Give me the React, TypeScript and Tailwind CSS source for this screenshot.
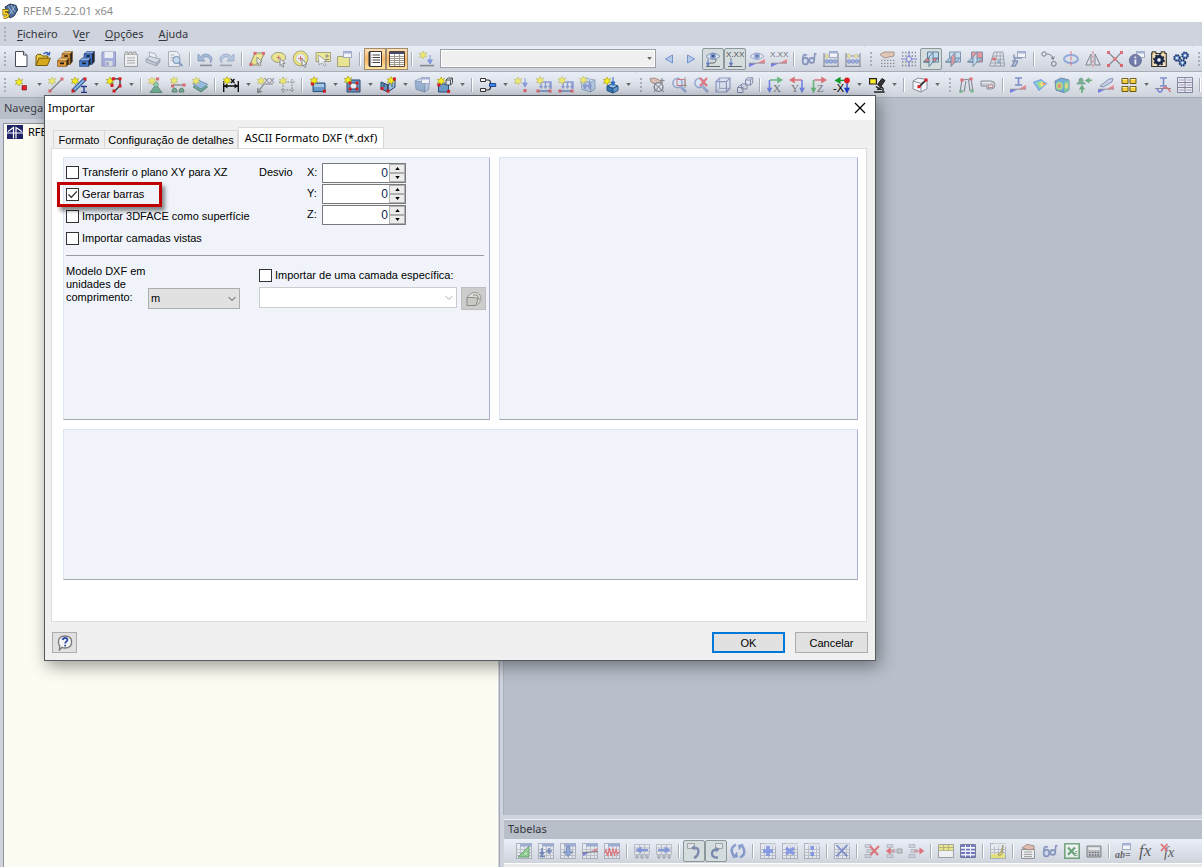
import React, { useState } from 'react';
import { ChevronDown } from 'lucide-react';

/* ---------- icon parts ---------- */

const Star = ({ x = 4, y = 4 }: { x?: number; y?: number }) => (
  <g transform={`translate(${x} ${y})`}>
    <path d="M0-4 1.2-1.6 3.6-2.6 2.4 0 4 1.6 1.4 1.6.4 4-1 1.8-3.6 2.4-2.2 0-4-1.6-1.4-1.4Z" fill="#f4ec1c" stroke="#a39a25" strokeWidth=".6" />
  </g>
);

const Dot = ({ x, y, c = '#d81f26' }: { x: number; y: number; c?: string }) => (
  <rect x={x - 1.5} y={y - 1.5} width="3" height="3" fill={c} />
);

const Grid = ({ head = '#6f86bd' }: { head?: string }) => (
  <g>
    <rect x=".5" y=".5" width="15" height="15" fill="#eceef2" stroke="#8d939d" />
    <path d="M.5 6.5h15M.5 9.5h15M.5 12.5h15M4.5 3v12M8.5 3v12M12.5 3v12" stroke="#a6abb4" fill="none" />
    <path d="M4 .5h12v3H4z" fill={head} />
  </g>
);

const Cabinet = ({ a, b, c }: { a: string; b: string; c: string }) => (
  <g stroke={c} strokeWidth=".6" strokeLinejoin="round">
    <path d="M5 3 8 .6h7.4L13 3.2Z" fill={a} />
    <path d="M13 3.2 15.4.6v10.2L13 13.4Z" fill="#2b2622" />
    <path d="M5 3h8v10.4H5z" fill={b} />
    <path d="M.6 9.4 3 7h8.6L9.4 10H.6Z" fill={a} />
    <path d="M9.4 10 11.6 7.5v5.4l-2.2 2.5Z" fill="#2b2622" />
    <path d="M.6 10h8.8v5.4H.6z" fill={b} />
    <path d="M7.2 5h3.8M3 12.4h4" stroke="#1c1c1c" strokeWidth="1.6" />
  </g>
);

const Glasses = () => (
  <g fill="none" stroke="#4f64a0" strokeWidth="1.6">
    <ellipse cx="4.4" cy="10" rx="2.8" ry="3.4" fill="#c9d6ef" />
    <circle cx="10.8" cy="9.4" r="2.5" fill="#c9d6ef" />
    <path d="M1.8 9Q1.600 4 4 3.600l2 .6M7.2 10l1.200-.4M13.2 9l.6-6 1.600-.4" />
  </g>
);

const Eye = () => (
  <g>
    <path d="M1 5.4Q8-1.5 15 5.4 8 11.5 1 5.4Z" fill="#e6ecf8" stroke="#6a7ba5" />
    <circle cx="8" cy="5" r="3" fill="#5a7fd0" />
    <circle cx="8" cy="5" r="1.2" fill="#1e2c55" />
  </g>
);

const Wedge = () => (
  <g>
    <path d="M0 16V12.200h8Z" fill="#3442e0" />
    <path d="M16 8v4.200H8Z" fill="#f0505a" />
    <path d="M0 12.2h16" stroke="#555" strokeWidth=".7" />
  </g>
);

const Lens = () => (
  <g>
    <circle cx="6.5" cy="6" r="4.6" fill="#dce8fb" stroke="#6b86c4" strokeWidth="1.6" />
    <path d="m10 10 5 5" stroke="#6b86c4" strokeWidth="2.6" />
  </g>
);

const Beads = () => (
  <g>
    <path d="M1 2v14M15 2v14M1 5h14M1 10h14M0 15.4h16" stroke="#5c6170" strokeWidth="1.2" />
    <g fill="#f0e480" stroke="#9a9050" strokeWidth=".5"><circle cx="4" cy="5" r="1.9" /><circle cx="11" cy="5" r="1.9" /></g>
    <g fill="#6f8fe0" stroke="#40558f" strokeWidth=".5"><circle cx="4" cy="10.400" r="2" /><circle cx="8" cy="10.400" r="2" /><circle cx="12" cy="10.400" r="2" /></g>
  </g>
);

const Window = ({ x = 7, y = 0 }: { x?: number; y?: number }) => (
  <g transform={`translate(${x} ${y})`}>
    <rect x=".5" y=".5" width="8" height="6" fill="#fff" stroke="#7c87a8" />
    <path d="M.5 1.5h8" stroke="#7a8fcb" strokeWidth="2" />
  </g>
);

// three crossing work planes; one of them is picked out in red
const Planes = ({ pick }: { pick: 'floor' | 'side' | 'front' }) => (
  <g stroke="#2b5378" strokeWidth=".9" strokeLinejoin="round">
    <path d="M4.5 1h11v10h-11z" fill={pick === 'front' ? '#f0636a' : '#b5dbf2'} />
    <path d="M.5 11 4.500 7h11L11 11Z" fill={pick === 'floor' ? '#f0636a' : '#86bbe0'} />
    <path d="m6 6 4-4.5V11l-4 4.5Z" fill={pick === 'side' ? '#f0636a' : '#bfe0f3'} fillOpacity=".85" />
    <path d="M.5 11h5.500" />
  </g>
);

const Axis = ({ l, h, v, flip, c = '#333' }: { l: string; h: string; v: string; flip?: boolean; c?: string }) => (
  <g>
    {flip ? (
      <path d="M13 3H4M5 1 1.500 3 5 5Z" stroke={h} fill={h} strokeWidth="1.6" />
    ) : (
      <path d="M3 3h9M11 1l3.500 2L11 5Z" stroke={h} fill={h} strokeWidth="1.6" />
    )}
    {flip ? (
      <path d="M13 3V12M11.500 11.500l1.500 3 1.500-3Z" stroke={v} fill={v} strokeWidth="1.6" />
    ) : (
      <path d="M2.500 3V12M1 11.500l1.500 3 1.500-3Z" stroke={v} fill={v} strokeWidth="1.6" />
    )}
    <text x={flip ? 2 : 6} y="15" fontSize="11" fontFamily="Liberation Serif, serif" fill={c}>{l}</text>
  </g>
);

const Xxx = ({ y = 5.5 }: { y?: number }) => (
  <text x="-1" y={y} fontSize="8" fontFamily="Liberation Sans, sans-serif" fill="#222">X.XX</text>
);

const Loads = () => (
  <g>
    <path d="M4 5h11v7M5 5v5M9.5 5v5M14 5v5" stroke="#5572c4" fill="none" strokeWidth="1.4" />
    <path d="m3 9 2 3 2-3ZM7.5 9l2 3 2-3ZM12 9l2 3 2-3Z" fill="#5572c4" />
    <path d="M1 14h14" stroke="#4c79b0" strokeWidth="2" />
    <Dot x={2} y={14} /><Dot x={14} y={14} />
  </g>
);

const Box3d = ({ f = '#6f97c7' }: { f?: string }) => (
  <g stroke="#3c5f8c" strokeWidth=".7">
    <path d="M1 4 6 1.4 15 3l-4.4 2.6Z" fill="#c8dcf0" />
    <path d="m1 4 9.6 1.6V15L2 12.4Z" fill={f} />
    <path d="M10.6 5.6 15 3v9l-4.4 3Z" fill="#9dbbdd" />
  </g>
);

const FootTable = () => (
  <g>
    <path d="M.5 1.5h15v10H.5zM.5 5h15M.5 8.5h15M5.5 1.5v10M10.5 1.5v10" fill="#e6e8ec" stroke="#9196a0" strokeWidth=".8" />
    <path d="M2 12v3h2v-3M7 12v3h2v-3M12 12v3h2v-3" fill="none" stroke="#6a6e78" />
  </g>
);

const Rows = () => (
  <g fill="#c4c7cc" stroke="#888d96" strokeWidth=".7">
    <path d="M1 1.5h6v3H1zM3 6.5h6v3H3zM1 11.5h6v3H1z" />
  </g>
);

const icons: Record<string, React.ReactNode> = {
  new: <g><path d="M2.5.5h8l3.5 3.5v11.5H2.5Z" fill="#fff" stroke="#444a57" /><path d="M10.5.5V4H14" fill="#dde" stroke="#444a57" /></g>,
  open: <g><path d="M1 14.5V5l1.5-1.6H6L7.4 5h5.4v2" fill="#e9c63e" stroke="#6f5a10" /><path d="M1 14.5 4 7.2h11.4l-3 7.3Z" fill="#d7a81d" stroke="#6f5a10" /><path d="M8.5 3q3-3 5.4 0M14.8.8l-.6 3-2.6-1" fill="none" stroke="#2f62b5" strokeWidth="1.3" /></g>,
  cabOrange: <Cabinet a="#f4c278" b="#e09a3c" c="#6d430f" />,
  cabBlue: <Cabinet a="#8db3ea" b="#4b7fd6" c="#1a3468" />,
  save: <g><path d="M1 1h13.5v14H1z" fill="#8690d6" stroke="#5b639f" /><path d="M3.5 1h8.5v6H3.5z" fill="#f3f4fa" /><path d="M4.5 10h7v5h-7z" fill="#d5d8e2" /><path d="M5.5 11h2v3.6h-2z" fill="#68709b" /></g>,
  notes: <g><path d="M1.5 3.5h13v12h-13z" fill="#fafafa" stroke="#777" /><path d="M2 3.5V1h3v2.5M6 3.5V1h3v2.5M10 3.5V1h3v2.5" fill="#d7d7b8" stroke="#777" /><path d="M4 7h8M4 9.5h8M4 12h8" stroke="#888" /></g>,
  print: <g stroke="#6c7488" strokeWidth=".8"><path d="M4 1 10 2.6l2 5-7-1.4Z" fill="#f7f8fb" /><path d="m1 8 4-2.6 10 2.8-3.6 4Z" fill="#d5dae6" /><path d="m1 8 10.4 4.2V15L1 11Z" fill="#b4bccd" /><path d="M11.4 12.2 15 8.2V11l-3.6 4Z" fill="#929bb0" /></g>,
  preview: <g><path d="M1.5.5h8l3 3v12h-11Z" fill="#f4f5f8" stroke="#888e9c" /><path d="M3.5 4h4M3.5 6.5h3M3.5 9h2" stroke="#999" /><circle cx="9.5" cy="9" r="3.4" fill="#bcd8f2" stroke="#5478ac" strokeWidth="1.3" /><path d="m12 11.5 3.4 3.6" stroke="#5478ac" strokeWidth="2.2" /></g>,
  undo: <g><path d="M1 3v7h7L5.6 7.6Q9 4 12.4 7.4q1.8 2 .8 4.6Q17 7.4 13 4.4 8.4 1.4 3.6 5.4Z" fill="#7d9fcb" stroke="#47689a" strokeWidth=".8" /><path d="M3 14.4h12" stroke="#595e68" strokeWidth="1.6" /></g>,
  redo: <g transform="translate(16 0) scale(-1 1)"><path d="M1 3v7h7L5.6 7.6Q9 4 12.4 7.4q1.8 2 .8 4.6Q17 7.4 13 4.4 8.4 1.4 3.6 5.4Z" fill="#9eb6d8" stroke="#6582ad" strokeWidth=".8" /><path d="M3 14.4h12" stroke="#7c8089" strokeWidth="1.6" /></g>,
  selPara: <g><path d="M6 2h9.5L10 14H.8Z" fill="#f1e95a" stroke="#5c572f" /><Dot x={6} y={2.4} /><Dot x={14.4} y={2.4} /><Dot x={2} y={13.4} /><path d="m8 6 5 5-2.4.2 1.4 3-1.600.6-1.400-3L8 13Z" fill="#fff" stroke="#555" strokeWidth=".9" /></g>,
  selEllipse: <g><ellipse cx="7.6" cy="6.4" rx="7" ry="5" fill="#f1e95a" stroke="#6f6937" /><path d="M7.5 4.4v4M5.5 6.4h4" stroke="#d03030" /><path d="m9 7.400 5 5-2.4.2 1.4 3-1.600.4-1.200-2.600-1.200 1.200Z" fill="#fff" stroke="#555" /></g>,
  selRing: <g><circle cx="7.6" cy="7.4" r="6" fill="none" stroke="#6f6937" strokeWidth="3.6" /><circle cx="7.6" cy="7.4" r="6" fill="#fff" fillOpacity=".6" stroke="#f1e52a" strokeWidth="2.2" /><path d="M7.5 5v5M5 7.4h5" stroke="#d03030" /><path d="m9 8 5 5-2.4.2 1.4 2.6-1.600.4-1.200-2.400L9 15Z" fill="#fff" stroke="#555" /></g>,
  selArrow: <g><path d="M1 1.5h14.5v9H1z" fill="#f3ea5a" stroke="#807a40" /><path d="M12 3v4M10 5h4M10 8.5h4" stroke="#555" /><path d="m3 4 1.2 10L7 11.6l2.4 3.6 1.6-1-2.2-3.6 3-.6Z" fill="#fff" stroke="#666" strokeWidth=".8" /></g>,
  selWin: <g><path d="M.5 5.5h12v10H.5z" fill="#f3ea5a" stroke="#807a40" /><Window x={6} /></g>,
  list: <g><path d="M2.5.5h12v15h-12z" fill="#fff" stroke="#333" /><path d="M2.5 1v14" stroke="#333" strokeWidth="2" /><path d="M6 4h7M6 6.5h7M6 9h7M6 11.5h7M4.6 4h.8M4.6 6.5h.8M4.6 9h.8M4.6 11.5h.8" stroke="#444" /></g>,
  tableBtn: <g><path d="M.5.5h15v15H.5z" fill="#fff" stroke="#574434" /><path d="M1 2h14" stroke="#4a4a70" strokeWidth="2" /><path d="M1 5.500h14M1 7.500h14M1 9.500h14M1 11.500h14M1 13.500h14M5.500 3v12M10.500 3v12" stroke="#a39a90" /></g>,
  loadNew: <g><Star x={4} y={4} /><path d="M11 4v6M8.6 9l2.4 4 2.4-4Z" fill="#4a6fd0" stroke="#4a6fd0" /><path d="M1 14.6h14" stroke="#555" strokeWidth="1.6" /></g>,
  prev: <path d="M11.5 4v8L4.5 8Z" fill="#9dbdf0" stroke="#2f62b5" />,
  next: <path d="M4.5 4v8l7-4Z" fill="#9dbdf0" stroke="#2f62b5" />,
  eyeDown: <g><Eye /><path d="M3 8v5M1.500 12 3 15l1.500-3Z" fill="#3d5fb0" stroke="#3d5fb0" /><path d="M1 15.500h14M5 12h4q2.500-1 2-4" fill="none" stroke="#444" /></g>,
  xxxDown: <g><Xxx /><path d="M4 7v6M2.500 12 4 15l1.500-3Z" fill="#3d5fb0" stroke="#3d5fb0" /><path d="M1 15.500h14" stroke="#444" /></g>,
  eyeWedge: <g><Eye /><Wedge /></g>,
  xxxWedge: <g><Xxx /><Wedge /></g>,
  glasses: <Glasses />,
  beadsWin: <g><Beads /><Window x={6} /></g>,
  beads: <Beads />,
  handGrid: <g><path d="M1 3.5 5 1h10v4l-5 1-4 1-2-1Z" fill="#e2b392" stroke="#6b4a36" strokeWidth=".8" /><path d="M2 9.4h14M2 12.4h14M2 15.4h14" stroke="#555b68" strokeWidth="1.4" strokeDasharray="1.4 1.6" /></g>,
  snap: <g><path d="M1 1.5h14M1 5h14M1 11h14M1 14.5h14" stroke="#444b5c" strokeDasharray="1.4 1.8" strokeWidth="1.4" /><path d="M8 0v16M0 8h16" stroke="#3d4cc0" /><circle cx="8" cy="8" r="2.6" fill="#dfe4f4" stroke="#3d4cc0" /></g>,
  plane1: <Planes pick="floor" />,
  plane2: <Planes pick="side" />,
  plane3: <Planes pick="front" />,
  gridTilt: <g><path d="M5 1h9l1.5 14H.5Z" fill="#dde2e9" stroke="#6e7580" /><path d="M4 5h11M3 8.4h12M2 12h13M8 1 6 15M11 1l.6 14" stroke="#6e7580" strokeWidth=".8" /><Dot x={5} y={8} /><Dot x={10} y={11} c="#5a8ab8" /></g>,
  cutWin: <g><Window x={6} /><path d="M3 3.500v3.500h8V7M1 10h6M4 7v3l-3 5h3l3-5" stroke="#4f6699" fill="none" strokeWidth="1.5" /></g>,
  copyNode: <g fill="none" stroke="#333844"><circle cx="3" cy="3" r="2.2" /><circle cx="12.8" cy="12.8" r="2.4" /><path d="M6 3q5 0 6 5M9.800 6.400 12.200 8.600l1-3.200" /></g>,
  rotate: <g><ellipse cx="8" cy="8" rx="7" ry="4" fill="none" stroke="#5c86cf" strokeWidth="2" /><path d="M8 0v16" stroke="#d8313a" strokeDasharray="4 1.4" /></g>,
  mirror: <g><path d="M6 3v11H.8ZM10 3v11h5.2Z" fill="#e1e4e9" stroke="#444a56" /><path d="M8 0v16" stroke="#d8313a" strokeDasharray="3 1.4" /></g>,
  cross: <g><path d="m1.5 1.5 13 13M14.5 1.5l-13 13" stroke="#4c5058" strokeWidth="1.2" /><Dot x={1.5} y={1.5} /><Dot x={14.5} y={1.5} /><Dot x={1.5} y={14.5} /><Dot x={14.5} y={14.5} /><circle cx="8" cy="8" r="2" fill="#e33a42" /></g>,
  info: <g><Window x={7} /><circle cx="6.4" cy="9.4" r="6" fill="#2f3c83" stroke="#202c60" /><path d="M6.4 8.4v5M6.4 5.4v1.8" stroke="#fff" strokeWidth="1.8" /></g>,
  gearBox: <g><path d="M.7 2.5h14.6v13H.7z" fill="#f3dfb8" stroke="#333" strokeWidth="1.1" /><path d="M1 3V.8h4V3M10 3V.8h4V3" fill="#e8c98c" stroke="#333" /><circle cx="8" cy="9" r="3.4" fill="#8fb0dc" stroke="#1c2a48" strokeWidth="3" /><circle cx="8" cy="9" r="5.2" fill="none" stroke="#1c2a48" strokeWidth="1.4" strokeDasharray="2 2" /><circle cx="8" cy="9" r="1.4" fill="#fff" /></g>,
  gears: <g stroke="#1c3768" fill="#6d96d8"><circle cx="4" cy="7" r="2.9" strokeWidth="1.8" strokeDasharray="1.6 .7" /><circle cx="12" cy="4.4" r="2.9" strokeWidth="1.8" strokeDasharray="1.6 .7" /><circle cx="9.4" cy="11.8" r="2.9" strokeWidth="1.8" strokeDasharray="1.6 .7" /><g fill="#fff" stroke="none"><circle cx="4" cy="7" r="1" /><circle cx="12" cy="4.4" r="1" /><circle cx="9.4" cy="11.8" r="1" /></g></g>,

  node: <g><Star x={5} y={5} /><path d="M8 8.500h4.500V13H8z" fill="#e0222a" stroke="#7d1014" strokeWidth=".6" /></g>,
  line: <g><path d="M2 14 14 2" stroke="#444" strokeWidth="1.2" /><Star x={4} y={4} /><Dot x={2} y={14} /><Dot x={14} y={2} /></g>,
  member: <g><path d="M2 14 14 2" stroke="#2d5b9a" strokeWidth="4" /><path d="M2 14 14 2" stroke="#8ab7e8" strokeWidth="2" /><Star x={4} y={4} /><Dot x={2} y={14} /><Dot x={14} y={2} /><path d="M10 9.5h6M13 9.5v6M10 15.4h6" stroke="#27408e" strokeWidth="1.4" /></g>,
  poly: <g><path d="M6 8V1.800h8v7L8 14.600" fill="none" stroke="#333" strokeWidth="1.3" /><Star x={4} y={4} /><Dot x={7.5} y={1.8} /><Dot x={14} y={1.8} /><Dot x={14} y={9} /><Dot x={6} y={8.5} /><Dot x={8} y={14} /></g>,
  support: <g><path d="M8 4v4" stroke="#555" /><path d="M4 13q4-8 8 0l2 2.4H2Z" fill="#2f9863" stroke="#1f5d3c" /><circle cx="8" cy="7.6" r="2.4" fill="#5fc38c" stroke="#1f5d3c" strokeWidth=".6" /><Star x={4} y={4} /><Dot x={9.6} y={2} /></g>,
  lineSupport: <g><path d="M3 8h11" stroke="#555" strokeWidth="1.4" /><path d="M2 15q0-4 2.500-4T7 15ZM9 15q0-4 2.500-4T14 15Z" fill="#3f9867" stroke="#1f5d3c" /><Star x={4} y={3.6} /><Dot x={2.6} y={9} /><Dot x={14} y={8} /></g>,
  surfSupport: <g><path d="m1 10 6-4 8.6 4L9 15Z" fill="#2c8b63" stroke="#1c5f43" /><path d="m1 7.4 6-4 8.6 4L9 12Z" fill="#6eaadd" stroke="#31618c" /><Star x={4} y={4} /></g>,
  dimension: <g><path d="M.7 4v11M15.300 4v11M1 9h14" stroke="#111" strokeWidth="1.4" /><path d="m1 9 3.400-2.400v4.800ZM15 9l-3.400-2.400v4.800Z" fill="#111" /><Star x={4} y={3.5} /><path d="m8 2 3.500 4M11.500 2 8 6" stroke="#111" strokeWidth="1.300" /></g>,
  comment: <g><path d="M16 7H7l-6 8M.8 11v4.4l4-1" stroke="#444" fill="none" strokeWidth="1.2" /><Star x={4} y={4} /><text x="7" y="6" fontSize="8" fontFamily="Liberation Sans, sans-serif" fill="#222">XX</text></g>,
  guide: <g><path d="M4 0v16M13 2v14M0 5h16M2 13h14" stroke="#444" strokeDasharray="1.6 1.2" /><Star x={4} y={4} /></g>,
  surface: <g><path d="M3 6h12v8.6H3Z" fill="#6d9fce" stroke="#2c547f" /><path d="M4 7h10v3H4z" fill="#a9cbe8" /><Star x={4} y={3.6} /><Dot x={2.4} y={7} /><Dot x={14.4} y={14.2} /></g>,
  opening: <g><path d="M2 3h13v12H2z" fill="#6d9fce" stroke="#274a70" /><path d="M5 6h7v6H5z" fill="#eef2f8" stroke="#274a70" /><Star x={3} y={3} /><Dot x={5} y={6} /><Dot x={12} y={6} /><Dot x={5} y={12} /><Dot x={12} y={12} /></g>,
  intersect: <g><path d="m1 5 7 3v7l-7-3Z" fill="#5f93c8" stroke="#22466d" /><path d="m8 8 7-5v7l-7 5Z" fill="#9fc6e8" stroke="#22466d" /><path d="M4 6v4M12 6v4M8 7v7" stroke="#333" strokeWidth=".8" /><Star x={11} y={3.5} /><Dot x={14.4} y={2} /><Dot x={2} y={11.6} /><Dot x={8} y={14} /></g>,
  solid: <g><Box3d /><Window x={7} /></g>,
  solidNew: <g><path d="M1.5 7h10v8h-10z" fill="#6d9fce" stroke="#2c547f" /><path d="M9 3h4.5v5H9zM9 3l2-2h4.5v5l-2 2M13.5 3l2-2" fill="#dfe6ef" stroke="#333" strokeWidth=".8" /><Star x={4} y={4} /><Dot x={1.8} y={8} /><Dot x={11.6} y={14.4} /></g>,
  combine: <g><path d="M.5 1.5h5v3h-5zM.5 11.5h5v3h-5z" fill="#fff" stroke="#333" /><path d="M6 3h2q2.6 0 2.6 3.4M6 13h2q2.6 0 2.6-3.4" fill="none" stroke="#333" strokeWidth="1.2" /><path d="M9.5 6.5h6.2v3H9.5z" fill="#3f85e8" stroke="#1d4a94" /></g>,
  nodeLoad: <g><Star x={4} y={4} /><path d="M11 1v6M8.8 6l2.2 4 2.2-4Z" fill="#4a6fd0" stroke="#4a6fd0" /><Dot x={11} y={13.6} /></g>,
  memLoad: <g><Loads /><Star x={4} y={3.4} /></g>,
  surfLoad: <g><Box3d f="#a9c5e4" /><path d="M5 3v8M9.5 3v8M3 8l2 4 2-4ZM7.5 8l2 4 2-4Z" fill="#5572c4" stroke="#5572c4" /><Star x={3.4} y={3} /></g>,
  solidLoad: <g><path d="M4 9 9 7l6 2-5 2.4Z" fill="#a6cbee" stroke="#265689" /><path d="m4 9 6 2.4V16l-6-2.4Z" fill="#3a78b8" stroke="#265689" /><path d="M10 11.4 15 9v4.4L10 16Z" fill="#6ba3d8" stroke="#265689" /><path d="M10 0v6M8 5l2 3.6L12 5Z" fill="#2e69c8" stroke="#2e69c8" /><Star x={4} y={4} /></g>,
  pan: <g><path d="M1 1.6 6 1l6 3v4l-6-1-4-2Z" fill="#d8a58f" stroke="#65412b" strokeWidth=".8" /><circle cx="9.6" cy="10" r="4.4" fill="#dfe2e8" stroke="#464c58" strokeWidth="1.4" /><path d="m5 15 9-10M5 6l10 9M13 1v5M10.6 3.4h5" stroke="#40454e" /></g>,
  zoomRect: <g><Lens /><path d="M6 2.5h8v6H6z" fill="none" stroke="#c4333a" /><path d="M14 0v11M11 8.5h5" stroke="#555" strokeWidth=".8" /></g>,
  zoomX: <g><Lens /><path d="m7 1 7 8M14 1 7 9" stroke="#e2323a" strokeWidth="2" /></g>,
  cube: <g fill="#d9e2f2" stroke="#5b6aa4" strokeWidth="1.2"><path d="M1 4.6h10.4V15H1zM1 4.6 4.6 1H15l-3.6 3.6M15 1v10.4L11.4 15" /><path d="M4.6 1v10.4H15M4.6 11.4 1 15" fill="none" strokeWidth=".8" /></g>,
  cubes: <g fill="#dfe5f2" stroke="#4d5684" strokeWidth="1"><path d="M8.500 3 10.500.8h5.200V6l-2.200 2h-5ZM8.500 3h5v5M13.500 3l2.200-2.200M4.500 7h5.500v5H4.500ZM.5 10.500h5.500v5H.5ZM.5 10.500 2.500 8.500H4.500M6 10.500l1.500-1.500" /></g>,
  axX: <Axis l="X" h="#1d9a38" v="#2a4be0" />,
  axY: <Axis l="Y" h="#d9262e" v="#2a4be0" flip />,
  axZ: <Axis l="Z" h="#d9262e" v="#1d9a38" />,
  axNX: <g><path d="M13 3.4H4M6 .8 1.6 3.4 6 6Z" stroke="#159a2c" fill="#159a2c" strokeWidth="1.2" /><path d="M13 4v9M11 11.4l2 4 2-4Z" stroke="#1d3fc8" fill="#1d3fc8" strokeWidth="1.2" /><circle cx="13" cy="3.4" r="2.8" fill="#e01820" /><text x="-1" y="15" fontSize="11" fontFamily="Liberation Sans, sans-serif">-X</text></g>,
  render: <g><path d="m13 1.500-4.500 6 3 2.500 4.500-6.500Z" fill="#333" stroke="#222" /><path d="M7 9.500q3 3 5.500.5M5 15h10.600M12 10q3.400 1.400 1.600 4M8 12.400h5" fill="none" stroke="#222" strokeWidth="1.4" /><path d="M.6 1.600h6.800v5.400H.6z" fill="#ffee2e" stroke="#222" strokeWidth="1.2" /></g>,
  clip: <g><path d="M1 4 6 1l9 1.6v9L9 15l-8-3Z" fill="#f2f4f7" stroke="#8a909c" /><path d="M1 4l8 2.4V15M9 6.4l6-3.8" fill="none" stroke="#8a909c" /><path d="m7 10 7-7" stroke="#222" strokeWidth="1.6" /><Dot x={14} y={3} /><Dot x={7} y={9.6} /></g>,
  frame: <g><path d="M2 15 4 3l9-1 2 12M6 15l2-11M10.500 3 12 14" fill="none" stroke="#464b56" strokeWidth="1.1" /><Dot x={4} y={3} /><Dot x={13} y={2} /><Dot x={3} y={14.4} c="#3b9b5c" /><Dot x={14} y={14} c="#3b9b5c" /></g>,
  cylinder: <g><path d="M1 4h10q4 0 4 4t-4 4H7V9H1Z" fill="#b9bcc2" stroke="#5d626b" /><path d="M2 5.6h9" stroke="#fff" /><path d="M8.500 8h4v2.500h-4z" fill="#f2f2f2" stroke="#a33b3f" strokeWidth=".8" /></g>,
  iWedge: <g><path d="M5 1h7M8.5 1v7M5 8h7" stroke="#3e58b4" strokeWidth="1.6" /><Wedge /></g>,
  isoSurf: <g><path d="m.8 5 8-3 6.800 4.500L7 14Z" fill="#3f6fe0" /><path d="m2.500 5.600 6.500-2.400 5.600 3.600-7.200 5.400Z" fill="#46c8d8" /><path d="m4.500 6 5-1.800 4.500 3-6 4Z" fill="#6fd94a" /><path d="m7 6.400 3.500-1.400 3.500 2.200-4.500 2.600Z" fill="#f6e33c" /><path d="m10 6.200 1.600-.6 2.400 1.500-2 1.200Z" fill="#ee5035" /></g>,
  isoBox: <g><path d="M1 4 7 1l8 2v10l-5 2.6L2 13Z" fill="#2f89d0" stroke="#2b4c7a" /><path d="m10 5.4 5-2.2V13l-5 2.6Z" fill="#42b87a" /><ellipse cx="5.4" cy="9" rx="3.4" ry="4" fill="#8de04a" /><ellipse cx="5.4" cy="9" rx="1.8" ry="2.4" fill="#f0602a" /><ellipse cx="12.4" cy="9" rx="1.4" ry="3" fill="#f3d63a" /></g>,
  reaction: <g><path d="M.6 7 3 4.500Q2.600 1 5 1t2 3.500L9.500 7Z" fill="#39915f" stroke="#1f5d3c" strokeWidth=".6" /><path d="M6 11v5M4.400 11.600 6 9l1.600 2.600ZM16 3.400h-4M12.600 1.800l-2.400 1.600 2.400 1.600Z" fill="#1f8a3a" stroke="#1f8a3a" strokeWidth="1.6" /></g>,
  pipeWedge: <g><path d="m2 9 9-7 4-.4-1 3.2L5 10Z" fill="#b9cbe8" stroke="#4b5e8e" /><Wedge /></g>,
  panels: <g fill="#f2cf3e" stroke="#6b5613"><path d="M1 1.5h6v5H1zM9 1.5h6v5H9zM1 9.5h6v5H1zM9 9.5h6v5H9z" /><path d="M1.6 2.4h4.6M9.6 2.4h4.6M1.6 10.4h4.6M9.6 10.4h4.6" stroke="#fff3b0" /></g>,
  iWave: <g><path d="M5 1h7M8.5 1v8M5 9h7" stroke="#3e58b4" strokeWidth="1.6" /><path d="M0 11.500h16" stroke="#555" /><path d="M2 11.500q3 7 6 0" fill="none" stroke="#2d3cd0" strokeWidth="1.4" /><path d="M8 11.500q3-4 7.500 3.500" fill="none" stroke="#d92a32" strokeWidth="1.4" /></g>,
  multi: <g><path d="M.5.5h15v15H.5zM8 .5v15M.5 5.5h15M.5 10.5h15" fill="#f2f3f8" stroke="#464b6c" /><path d="M2 3h5M9.6 3h5M2 8h5M9.6 8h5M2 13h5M9.6 13h5" stroke="#8c6fa8" /></g>,

  tTri: <g><Grid /><path d="M2 14 13 3v11Z" fill="#5cc05a" stroke="#2f7c33" /><path d="M8 11.6 10.6 9v2.6Z" fill="#e9efe9" /></g>,
  tPlus: <g><Grid /><path d="M4 5v6M1.8 9 4 12l2.2-3M1.6 13.5H7M11 5v6M8 8h6" stroke="#2d4f96" strokeWidth="1.6" fill="none" /></g>,
  tDown: <g><Grid /><path d="M6.4 3.5h3.4v5.2h2.8L8 13.6 3.6 8.7h2.8Z" fill="#6181cf" stroke="#32508e" /></g>,
  tWedge: <g><Grid /><path d="M1 12V9.500L8 9ZM15 5v3.500L8 9Z" fill="#f0505a" /><path d="M1 13V9.500L8 9Z" fill="#3442e0" /><path d="M0 9.500 16 8.500" stroke="#444" /></g>,
  tWave: <g><Grid /><path d="m.5 10 1.5-3 1.6 6L5.4 5l1.8 8L9 6l1.6 6L12 6.6l1.4 4.6L15.5 8" stroke="#e0303a" fill="none" strokeWidth="1.2" /></g>,
  tLeft: <g><FootTable /><path d="M14 7H6M6.500 5 3 7l3.500 2Z" fill="#4767d0" stroke="#4767d0" strokeWidth="1.8" /></g>,
  tRight: <g><FootTable /><path d="M2 7h8M9.500 5 13 7l-3.500 2Z" fill="#4767d0" stroke="#4767d0" strokeWidth="1.8" /></g>,
  hookR: <g><path d="M1.500.5h7v5h-7z" fill="#e2e5ea" stroke="#8d929b" /><path d="M7 5q6-1 5.400 4-.4 4-4.400 6" fill="none" stroke="#5f719c" strokeWidth="2.400" /><path d="m8.400 2-3.400 3 4 2.400Z" fill="#5f719c" /></g>,
  hookL: <g><path d="M7.500.5h7v5h-7z" fill="#e2e5ea" stroke="#8d929b" /><path d="M10 14.500q-6 .5-6-4 0-4 5-4" fill="none" stroke="#5f719c" strokeWidth="2.400" /><path d="m8 3.800 3.600 2.800L8 9.400Z" fill="#5f719c" /></g>,
  sync: <g fill="none" stroke="#4f6fb8" strokeWidth="2.6"><path d="M6 1.6Q.6 4 2 9.4q1 3.400 3 4.400M10 14.4q5.4-2.4 4-7.8-1-3.400-3-4.400" /><path d="M2.500 14.500 7.500 14l-.8-5M13.500 1.500 8.500 2l.8 5" fill="#4f6fb8" strokeWidth=".8" /></g>,
  tAdd: <g><Grid head="#d9dce3" /><path d="M8 3v10M3 8h10" stroke="#4d6be0" strokeWidth="3.6" /></g>,
  tMul: <g><Grid head="#d9dce3" /><path d="m4 5 8 6M12 5l-8 6" stroke="#4d6be0" strokeWidth="3.4" /></g>,
  tDiv: <g><Grid head="#d9dce3" /><path d="M6.4 3h3.6v4H6.4zM6.4 9H10v4H6.4z" fill="#4d6be0" /></g>,
  tClear: <g><Grid head="#d9dce3" /><path d="m2.4 2 11 11.4M13.4 2l-11 11.4" stroke="#3a53b8" strokeWidth="1.8" /></g>,
  rowDel: <g><Rows /><path d="m6 3 8 9M15 3 6.500 12" stroke="#dd2b33" strokeWidth="2" /></g>,
  rowIn: <g><Rows /><path d="M9 8H2M4 5.6.8 8 4 10.4Z" fill="#dd2b33" stroke="#dd2b33" strokeWidth="1.2" /><path d="M11 6h5v4h-5z" fill="#bbb" stroke="#777" /></g>,
  rowOut: <g><Rows /><path d="M6 8h7M12 5.6 15.2 8 12 10.4Z" fill="#dd2b33" stroke="#dd2b33" strokeWidth="1.2" /></g>,
  tYellow: <g><path d="M.5 1.5h15v13H.5z" fill="#fdfdfd" stroke="#777" /><path d="M1 2h14v5H1z" fill="#f0e64b" /><path d="M1 4.5h14M1 7.5h14M5.5 2v5M10.5 2v5" stroke="#898336" strokeWidth=".8" /></g>,
  tBlue: <g><path d="M.5 1.5h15v13H.5z" fill="#fff" stroke="#353b58" /><path d="M1 3h14M1 6.6h14M1 10h14M1 13.4h14" stroke="#2a34a8" strokeWidth="1.8" /><path d="M5.5 2v12M10.5 2v12" stroke="#fff" /></g>,
  tPen: <g><Grid head="#e6e8ee" /><path d="M1 11h14v4H1z" fill="#efe53a" /><path d="m13 2-2 7-3 2 1.4 2 3.2-3Z" fill="#f4dc12" stroke="#6d6320" /></g>,
  handList: <g><path d="M1.5 6.5h13v9h-13z" fill="#f3f3f3" stroke="#666" /><path d="M4 9h8M4 11.4h8M4 13.6h8" stroke="#777" /><path d="M2 5 7 1.4l7 1.4V6L8 7 6 6Z" fill="#dea284" stroke="#65412b" strokeWidth=".8" /></g>,
  excel: <g><path d="M.8.8h14.4v14.4H.8z" fill="#f3f9f3" stroke="#2f7e3a" strokeWidth="1.6" /><path d="m4 4.400 7 7.400M11 4.400l-7 7.400" stroke="#1f7a2e" strokeWidth="2.200" /><path d="M10 10.500h3.500M10 12.500h3.500M11 8.500h2.500" stroke="#1f7a2e" strokeWidth=".8" /></g>,
  calc: <g><path d="M1 3h14v11H1z" fill="#a9acb4" stroke="#444" /><path d="M2.4 4.4h11.2v2.4H2.4z" fill="#eef2ea" /><path d="M3 9.4h10.6M3 12h10.6" stroke="#222" strokeWidth="1.4" strokeDasharray="1.6 1.2" /></g>,
  ab: <g><Window x={6} /><text x="-1" y="15.4" fontSize="10" fontStyle="italic" fontWeight="700" fontFamily="Liberation Serif, serif" fill="#111">ab=</text></g>,
  fx: <text x="1" y="13" fontSize="17" fontStyle="italic" fontFamily="Liberation Serif, serif" fill="#000">fx</text>,
  fxDel: <g><text x="4" y="14" fontSize="14" fontStyle="italic" fontFamily="Liberation Serif, serif" fill="#000">fx</text><path d="m1 1 6.4 7M7.4 1 1 8" stroke="#dd2b33" strokeWidth="1.8" /></g>,
};

/* ---------- toolbar ---------- */

// prefix of an item: "!" pressed, "*" highlighted, "~" dimmed; suffix "+" adds a drop-down arrow
// "|" is a separator and "combo" the case selector
const fileBar = ['new', 'open', 'cabOrange', 'cabBlue', '~save', '~notes', '~print', '~preview', '|', '~undo', '~redo', '|', '~selPara', '~selEllipse', '~selRing', '~selArrow', '~selWin', '|', '*list', '*tableBtn', '|', '~loadNew', 'combo', '~prev', '~next', '!eyeDown', '!xxxDown', '~eyeWedge', '~xxxWedge', '|', '~glasses', '~beadsWin', '~beads'];
const planeBar = ['~handGrid', '~snap', '!plane1', '~plane2', '~plane3', '~gridTilt', '~cutWin', '|', '~copyNode', '~rotate', '~mirror', '~cross', '~info', 'gearBox', 'gears'];
const insertBar = ['node+', '~line', 'member+', 'poly+', '|', '~support', '~lineSupport', '~surfSupport', '|', 'dimension+', '~comment', '~guide', '|', 'surface+', 'opening+', 'intersect+', '~solid', 'solidNew+', '|', 'combine+', '~nodeLoad', '~memLoad', '~memLoad', '~surfLoad', 'solidLoad+'];
const viewBar = ['~pan', '~zoomRect', '~zoomX', '~cube', '~cubes', '|', '~axX', '~axY', '~axZ', 'axNX+', 'render+', '|', 'clip+'];
const resultBar = ['~frame', '~cylinder', '|', '~iWedge', '~isoSurf', '~isoBox', '~reaction', '~pipeWedge', 'panels+', '~iWave', '~multi', '|'];
const tableBar = ['tTri', 'tPlus', 'tDown', 'tWedge', 'tWave', '|', 'tLeft', 'tRight', '|', '!hookR', '!hookL', 'sync', '|', 'tAdd', 'tMul', 'tDiv', '|', 'tClear', '|', 'rowDel', 'rowIn', 'rowOut', '|', 'tYellow', 'tBlue', '|', 'tPen', '|', 'handList', 'glasses', 'excel', 'calc', '|', 'ab', 'fx', 'fxDel'];

const Grip = () => (
  <span className="flex w-[10px] shrink-0 flex-col items-center gap-[2px]">
    <span className="size-[2px] bg-[#a9aeb9]" />
    <span className="size-[2px] bg-[#a9aeb9]" />
    <span className="size-[2px] bg-[#a9aeb9]" />
    <span className="size-[2px] bg-[#a9aeb9]" />
  </span>
);

const Tool = ({ item, dim }: { item: string; dim?: boolean }) => {
  if (item === '|') {
    return (
      <span className="flex w-2 shrink-0 justify-center">
        <span className="h-[14px] w-[2px] border-l border-[#a8adb7] bg-white" />
      </span>
    );
  }
  if (item === 'combo') {
    return (
      <span className="relative mx-[2px] block w-[216px] shrink-0">
        <select aria-label="Load case" className="block h-[19px] w-full appearance-none border border-[#9a9fa8] bg-[#f0f0f0] px-1 outline-1 -outline-offset-2 outline-white" />
        <svg viewBox="0 0 6 4" className="pointer-events-none absolute top-2 right-1 h-[3px] w-[5px]"><path d="M0 0h6L3 4Z" fill="#666" /></svg>
      </span>
    );
  }
  const split = item.endsWith('+');
  const name = item.replace(/[!*~+]/g, '');
  const pressed = item[0] === '!';
  const lit = item[0] === '*';
  const faded = dim || item[0] === '~';
  let box = 'border-transparent';
  if (pressed) box = 'rounded-[2px] border-[#8b989c] bg-[#d5dcde]';
  if (lit) box = 'border-[#a08c6c] bg-linear-to-b from-[#fbe0b8] via-[#fbb765] to-[#fde3a0]';
  let fade = '';
  if (faded) fade = 'opacity-60';
  if (pressed) fade = 'opacity-75';
  return (
    <>
      <button type="button" aria-label={name} className={`flex h-[22px] shrink-0 items-center justify-center border ${split ? 'w-6' : 'w-[22px]'} ${box}`}>
        <svg viewBox="0 0 16 16" className={`size-4 shrink-0 overflow-visible ${fade}`}>{icons[name]}</svg>
      </button>
      {split && (
        <button type="button" aria-label={`${name} menu`} className="flex h-[22px] w-[11px] shrink-0 items-center justify-center">
          <svg viewBox="0 0 6 4" className="h-[3px] w-[5px]"><path d="M0 0h6L3 4Z" fill="#666" /></svg>
        </button>
      )}
    </>
  );
};

const Toolbar = ({ items }: { items: string[] }) => (
  <div role="toolbar" className="flex h-[25px] shrink-0 items-center rounded-r-[3px] bg-linear-to-b from-[#eaeef7] to-[#cfd3dc] pr-[2px]">
    <Grip />
    {items.map((item, i) => <Tool key={i} item={item} />)}
  </div>
);

/* ---------- dialog controls ---------- */

const Check = ({ label, on = false }: { label: string; on?: boolean }) => {
  const [checked, setChecked] = useState(on);
  return (
    <label className="flex h-[22px] items-center gap-[3px] whitespace-nowrap">
      <span className="relative block size-[13px]">
        <input type="checkbox" checked={checked} onChange={e => setChecked(e.target.checked)} className="block size-[13px] appearance-none border border-[#333] bg-white" />
        {checked && <svg viewBox="0 0 13 13" className="pointer-events-none absolute inset-0"><path d="M2.5 6.5 5.3 9.3 10.8 3.4" fill="none" stroke="#222" strokeWidth="1.2" /></svg>}
      </span>
      {label}
    </label>
  );
};

const Spin = ({ axis }: { axis: string }) => {
  const [value, setValue] = useState(0);
  return (
    <div className="flex h-[21px] items-center">
      <label htmlFor={`offset-${axis}`} className="w-[15px]">{axis}:</label>
      <div className="flex h-5 w-[84px] border border-[#7a7a7a] bg-white">
        <input id={`offset-${axis}`} value={value} onChange={e => setValue(Number(e.target.value) || 0)} className="w-[66px] bg-transparent pr-[1px] text-right text-xs text-[#0d2a50] outline-none" />
        <div className="flex flex-1 flex-col bg-[#ececec]">
          {[1, -1].map(step => (
            <button key={step} type="button" aria-label={`${axis} ${step > 0 ? 'up' : 'down'}`} onClick={() => setValue(value + step)} className="flex flex-1 items-center justify-center border border-[#b0b0b0]">
              <svg viewBox="0 0 6 4" className="h-[3px] w-[5px]"><path d={step > 0 ? 'M0 4h6L3 0Z' : 'M0 0h6L3 4Z'} fill="#000" /></svg>
            </button>
          ))}
        </div>
      </div>
    </div>
  );
};

const groupBox = 'border border-t-[#dbe5f3] border-l-[#dbe5f3] border-r-[#a9b2dd] border-b-[#a5a8ae] bg-[#f0f4fa]';

const ImportDialog = () => (
  <section role="dialog" aria-label="Importar" className="absolute top-[95px] left-[44px] flex w-[832px] flex-col border border-[#555a60] bg-[#f0f0f0] text-black shadow-[3px_5px_16px_rgba(0,0,0,0.4)]">
    <header className="flex h-6 items-center justify-between bg-white pr-[9px] pl-[3px] font-['Noto_Sans',sans-serif]">
      <h1>Importar</h1>
      <button type="button" aria-label="Fechar">
        <svg viewBox="0 0 12 12" className="size-3"><path d="m1 1 10 10M11 1 1 11" stroke="#000" strokeWidth="1.2" /></svg>
      </button>
    </header>

    <div className="pt-[7px] pr-2 pl-[6px]">
      <div role="tablist" className="flex items-end pl-[2px] whitespace-nowrap">
        <button role="tab" type="button" className="h-[18px] w-[51px] border border-r-0 border-b-0 border-[#d9d9d9] text-center leading-[18px]">Formato</button>
        <button role="tab" type="button" className="h-[18px] w-[134px] border border-b-0 border-[#d9d9d9] text-center leading-[18px]">Configuração de detalhes</button>
        <button role="tab" type="button" aria-selected="true" className="h-[21px] w-[146px] border border-b-0 border-[#d9d9d9] bg-white text-center font-['Noto_Sans',sans-serif] leading-[18px]">ASCII Formato DXF (*.dxf)</button>
      </div>

      <div className="border border-[#dcdcdc] bg-white pt-2 pr-2 pb-[41px] pl-[11px]">
        <div className="flex gap-[9px]">
          <div className={`h-[263px] w-[427px] px-[2px] pt-[3px] ${groupBox}`}>
            <div className="flex">
              <div className="relative w-[193px]">
                <Check label="Transferir o plano XY para XZ" />
                <Check label="Gerar barras" on />
                <Check label="Importar 3DFACE como superfície" />
                <Check label="Importar camadas vistas" />
                <span className="pointer-events-none absolute top-[21px] -left-[9px] h-[25px] w-[105px] border-3 border-[#c00000] shadow-[3px_4px_4px_rgba(0,0,0,0.45)]" />
              </div>
              <span className="w-12 leading-[22px]">Desvio</span>
              <div className="pt-[1px]">
                <Spin axis="X" />
                <Spin axis="Y" />
                <Spin axis="Z" />
              </div>
            </div>
            <hr className="mt-[6px] mr-[3px] border-[#9b9b9b]" />
            <div className="flex pt-2">
              <label htmlFor="unit" className="w-[82px] pt-[1px] leading-[13px]">Modelo DXF em unidades de comprimento:</label>
              <span className="relative mt-6 mr-[19px] block h-[21px] w-[92px]">
                <select id="unit" className="block h-[21px] w-full appearance-none border border-[#adadad] bg-[#e1e1e1] px-[2px]">
                  <option>m</option>
                </select>
                <ChevronDown className="pointer-events-none absolute top-[5px] right-[2px] size-3" strokeWidth={2} color="#444" />
              </span>
              <div>
                <Check label="Importar de uma camada específica:" />
                <div className="flex gap-1 pt-[1px]">
                  <span className="relative block w-[198px]">
                    <select aria-label="Camada" disabled className="block h-[21px] w-full appearance-none border border-[#cccccc] bg-white" />
                    <ChevronDown className="pointer-events-none absolute top-[5px] right-[2px] size-3" strokeWidth={2} color="#aaa" />
                  </span>
                  <button type="button" disabled aria-label="Procurar" className="flex h-[23px] w-[25px] items-center justify-center border border-[#bfbfbf] bg-[#cccccc]">
                    <svg viewBox="0 0 16 16" className="size-4">
                      <path d="M1.500 5 7 1.500h4q4 1.500 4 6.500l-2.500 5-4 .5Z" fill="#dcdcd8" stroke="#9a9a96" />
                      <path d="M1 6.500h7.500l3.500 1-2 7H1Z" fill="#c9c9c4" stroke="#8a8a86" />
                      <path d="M7 4h4l2.500 5" fill="none" stroke="#8a8a86" />
                    </svg>
                  </button>
                </div>
              </div>
            </div>
          </div>
          <div className={`flex-1 ${groupBox}`} />
        </div>
        <div className={`mt-[9px] h-[151px] ${groupBox}`} />
      </div>
    </div>

    <footer className="flex items-center gap-[10px] px-[7px] pt-[10px] pb-[7px]">
      <button type="button" aria-label="Ajuda" className="mr-auto flex h-[21px] w-[25px] items-center justify-center border border-[#adadad] bg-[#e1e1e1]">
        <svg viewBox="0 0 16 16" className="size-4">
          <path d="M8 1q6.600 0 6.600 6T8 13q-2 0-3-.6L2.400 15l.4-4Q1.400 9.400 1.400 7 1.400 1 8 1Z" fill="#f5f6f8" stroke="#7a7a7a" strokeWidth="1.3" />
          <path d="M5.600 5Q6 3 8.200 3q2.200 0 2.200 1.800 0 1.200-1.200 1.900-1 .6-1 1.700M8.200 9.800v1.600" fill="none" stroke="#2f4fa8" strokeWidth="1.800" />
        </svg>
      </button>
      <button type="button" className="h-[21px] w-[73px] border-2 border-[#0078d7] bg-[#e1e1e1] leading-[18px]">OK</button>
      <button type="button" className="h-[21px] w-[73px] border border-[#adadad] bg-[#e1e1e1] leading-[20px]">Cancelar</button>
    </footer>
  </section>
);

const menu = [['', 'F', 'icheiro'], ['V', 'e', 'r'], ['', 'O', 'pções'], ['', 'A', 'juda']];

const App: React.FC = () => {
  return (
    <div className="relative flex min-h-screen flex-col overflow-hidden bg-[#cfd3dd] font-['Liberation_Sans',Arial,sans-serif] text-[11px] text-black">
      <header className="flex h-[22px] items-center gap-[5px] bg-white pl-[2px] font-['Noto_Sans',sans-serif] text-[#8c8c8c]">
        <svg viewBox="0 0 16 16" className="size-4">
          <path d="M3 4 8 1l6 1.400 1.600 4.600-3.600 6-4 2Z" fill="#4a6a98" stroke="#25364f" />
          <path d="m6 3 5 8M9 2l4 7M13 3 7 12" stroke="#b9cbe4" strokeWidth=".8" />
          <path d="M6.500 7.500H2v3.200q4-.6 4 1.700 0 2-4.500 1.700" fill="none" stroke="#6b5300" strokeWidth="3" />
          <path d="M6.500 7.500H2v3.200q4-.6 4 1.700 0 2-4.500 1.700" fill="none" stroke="#ffd92e" strokeWidth="1.700" />
        </svg>
        <span>RFEM 5.22.01 x64</span>
      </header>

      <nav className="flex h-6 items-center font-['Noto_Sans',sans-serif] text-[#33363c]">
        <Grip />
        <div className="flex gap-[15px] pl-[7px]">
          {menu.map(([a, b, c]) => (
            <button key={a + b + c} type="button">{a}<u className="underline-offset-2">{b}</u>{c}</button>
          ))}
        </div>
      </nav>

      <div className="flex overflow-hidden border-b border-[#a9adb7]">
        <Toolbar items={fileBar} />
        <Toolbar items={planeBar} />
        <div className="flex flex-1 items-center bg-linear-to-b from-[#eaeef7] to-[#cfd3dc]"><Grip /></div>
      </div>
      <div className="flex overflow-hidden border-b border-[#a9adb7]">
        <Toolbar items={insertBar} />
        <Toolbar items={viewBar} />
        <Toolbar items={resultBar} />
        <div className="flex-1 bg-linear-to-b from-[#eaeef7] to-[#cfd3dc]" />
      </div>

      <div className="flex flex-1">
        <aside className="flex w-[500px] shrink-0 flex-col border-r border-[#a3a8b4]">
          <h2 className="h-[21px] bg-[#b8bfc9] pl-1 font-['Noto_Sans',sans-serif] leading-[20px] text-[#3c4048]">Navega</h2>
          <div className="mt-1 mr-[1px] ml-[3px] flex-1 border-t border-l border-[#8e939e] bg-[#fcfcf3] pl-[3px]">
            <div className="flex items-center gap-[5px] font-['Noto_Sans',sans-serif]">
              <svg viewBox="0 0 16 14" className="h-[14px] w-4">
                <path d="M0 0h16v14H0z" fill="#1f2468" />
                <path d="M0 8h16M1 6.500 6.500 2.500v11M9 13.500V2.500l6 4" fill="none" stroke="#fff" strokeWidth="1.200" />
              </svg>
              RFEM
            </div>
          </div>
        </aside>
        <main className="ml-[3px] flex flex-1 flex-col">
          <div className="flex-1 border-l border-[#aab0bb] bg-[#b8bfca]" />
          <section className="mt-1 ml-[1px] border-t border-[#eef1f6]">
            <h2 className="h-[19px] bg-[#b8bfc9] pl-1 font-['Noto_Sans',sans-serif] leading-[18px] text-[#33363c]">Tabelas</h2>
            <div className="flex overflow-hidden bg-linear-to-b from-[#eaeef7] to-[#cfd3dc]">
              <div role="toolbar" className="flex h-6 items-center pl-[9px]">
                {tableBar.map((item, i) => <Tool key={i} item={item} dim />)}
              </div>
            </div>
            <div className="h-1 border-t border-white bg-[#ebebeb]" />
          </section>
        </main>
      </div>

      <ImportDialog />
    </div>
  );
};

export default App;
